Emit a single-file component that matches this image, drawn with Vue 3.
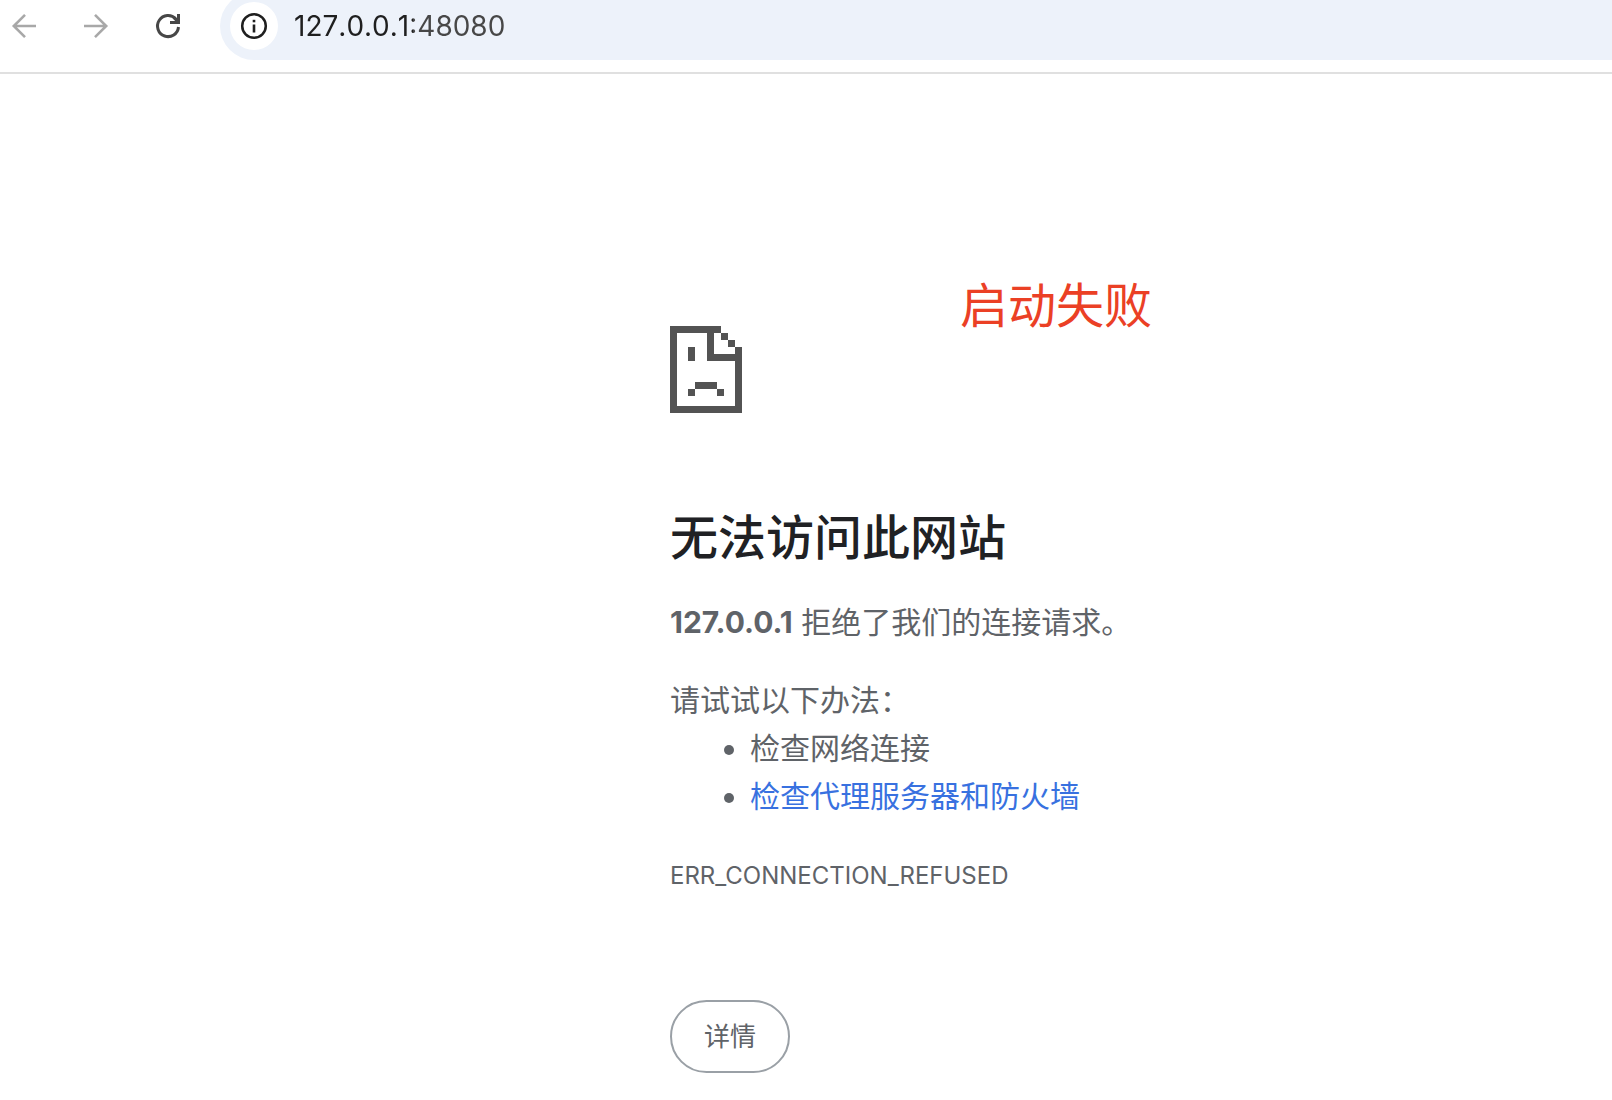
<script setup>
import { ref } from 'vue'

const address = ref('127.0.0.1:48080')
const host = '127.0.0.1'
</script>

<template>
  <div class="browser">
    <header class="toolbar">
      <nav class="nav">
        <button type="button" class="nav-btn" aria-label="后退" disabled>
          <svg viewBox="0 0 28 28" fill="none" stroke="#a8a8a8" stroke-width="2.6">
            <path d="M26 14H3.5M15 2.8L3.8 14L15 25.2" />
          </svg>
        </button>
        <button type="button" class="nav-btn" aria-label="前进" disabled>
          <svg viewBox="0 0 28 28" fill="none" stroke="#a8a8a8" stroke-width="2.6">
            <path d="M2 14H24.5M13 2.8L24.2 14L13 25.2" />
          </svg>
        </button>
        <button type="button" class="nav-btn" aria-label="重新加载">
          <svg viewBox="0 0 28 28" fill="none" stroke="#474747" stroke-width="3">
            <path d="M24.5 15A10.5 10.5 0 1 1 21.8 7L24 9.5" />
            <path d="M24.5 2V10.5H16" />
            <path d="M20 5.500L24.500 10.500" />
          </svg>
        </button>
      </nav>
      <div class="omnibox">
        <button type="button" class="site-info" aria-label="查看网站信息">
          <svg viewBox="0 0 28 28">
            <circle cx="14" cy="14" r="11.8" fill="none" stroke="#1f1f1f" stroke-width="2.5" />
            <rect x="12.700" y="12.500" width="2.600" height="8" fill="#1f1f1f" />
            <rect x="12.700" y="7.800" width="2.600" height="2.500" fill="#1f1f1f" />
          </svg>
        </button>
        <input v-model="address" class="address" type="text" aria-label="地址" spellcheck="false" />
      </div>
    </header>

    <main class="error">
      <svg class="sad-page" viewBox="0 0 72 87" fill="#535353" shape-rendering="crispEdges" aria-hidden="true">
        <path d="M0 0H51V7H44V28H65V21H72V87H0ZM7 7V80H65V35H37V7Z" fill-rule="evenodd" />
        <path d="M51 7h7v7h-7zM58 14h7v7h-7zM18 21h7v14h-7zM25 56h22v7h-22zM18 63h7v7h-7zM47 63h7v7h-7z" />
      </svg>
      <p class="note">启动失败</p>
      <h1>无法访问此网站</h1>
      <p class="summary"><strong>{{ host }}</strong> 拒绝了我们的连接请求。</p>
      <p class="hint">请试试以下办法：</p>
      <ul>
        <li>检查网络连接</li>
        <li><a href="#buttons">检查代理服务器和防火墙</a></li>
      </ul>
      <p class="code">ERR_CONNECTION_REFUSED</p>
      <button type="button" class="details">详情</button>
    </main>
  </div>
</template>

<style>
body {
  background: #fff;
}
</style>

<style scoped>
.browser {
  font-family: Inter, "Noto Sans CJK SC", sans-serif;
  color: #5f6368;
  overflow: hidden;
}

button,
input {
  font: inherit;
  margin: 0;
  padding: 0;
  border: 0;
}

.toolbar {
  display: flex;
  height: 72px;
  border-bottom: 2px solid #e0e0e0;
}

.nav {
  display: flex;
  gap: 44px;
  width: 220px;
  height: 52px;
  padding-left: 10px;
  box-sizing: border-box;
  align-items: center;
}

.nav-btn {
  display: flex;
  width: 28px;
  height: 28px;
  background: none;
}

.nav-btn svg {
  width: 28px;
  height: 28px;
}

.omnibox {
  flex: 1;
  display: flex;
  align-items: center;
  gap: 16px;
  height: 68px;
  margin-top: -8px;
  padding-left: 10px;
  border-radius: 34px 0 0 34px;
  background: #edf2fa;
}

.site-info {
  display: flex;
  align-items: center;
  justify-content: center;
  width: 48px;
  height: 48px;
  border-radius: 50%;
  background: #fff;
}

.site-info svg {
  width: 28px;
  height: 28px;
}

.address {
  flex: 1;
  height: 40px;
  font-size: 28px;
  font-kerning: none;
  color: #1f1f1f;
  background: linear-gradient(90deg, #1f1f1f 119px, #474747 119px);
  background-clip: text;
  -webkit-text-fill-color: transparent;
  outline: none;
}

.error {
  position: relative;
  margin-left: calc(50% - 136px);
  padding: 252px 0 24px;
  font-size: 30px;
  line-height: 48px;
}

.sad-page {
  display: block;
  width: 72px;
  height: 87px;
}

.note {
  position: absolute;
  top: 202px;
  left: 290px;
  margin: 0;
  font-size: 48px;
  line-height: 60px;
  font-weight: 400;
  color: #eb4025;
}

h1 {
  margin: 97px 0 32px;
  font-size: 48px;
  line-height: 56px;
  font-weight: 500;
  color: #202124;
}

.summary,
.hint,
.code {
  margin: 0;
}

.summary {
  margin-bottom: 30px;
}

ul {
  margin: 0;
  padding-left: 80px;
}

a {
  color: #3871e0;
  text-decoration: none;
}

.code {
  margin-top: 38px;
  font-size: 24px;
  line-height: 36px;
}

.details {
  margin-top: 106px;
  padding: 0 32px;
  height: 73px;
  border: 2px solid #9aa0a6;
  border-radius: 37px;
  background: #fff;
  font-size: 26px;
  color: #5f6368;
}
</style>
